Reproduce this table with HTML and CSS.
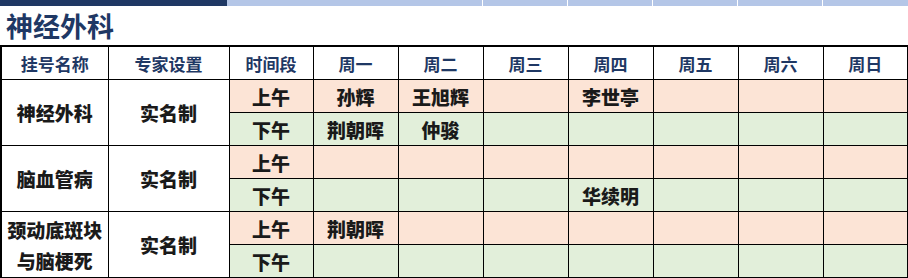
FILE: index.html
```html
<!DOCTYPE html>
<html lang="zh">
<head>
<meta charset="utf-8">
<link rel="stylesheet" href="styles.css">
</head>
<body>
<div class="topbar">
  <span class="seg dark"></span>
  <span class="seg light s1"></span>
  <span class="seg light s2"></span>
  <span class="seg light s3"></span>
  <span class="seg light s4"></span>
  <span class="seg light s5"></span>
  <span class="seg light s6"></span>
</div>
<h1 class="title">神经外科</h1>
<table class="sched">
  <colgroup>
    <col class="c-name"><col class="c-exp"><col class="c-time">
    <col class="c-day"><col class="c-day"><col class="c-day"><col class="c-day"><col class="c-day"><col class="c-day"><col class="c-day">
  </colgroup>
  <thead>
    <tr>
      <th>挂号名称</th><th>专家设置</th><th>时间段</th>
      <th>周一</th><th>周二</th><th>周三</th><th>周四</th><th>周五</th><th>周六</th><th>周日</th>
    </tr>
  </thead>
  <tbody>
    <tr class="am">
      <td class="plain" rowspan="2">神经外科</td><td class="plain" rowspan="2">实名制</td>
      <td>上午</td><td>孙辉</td><td>王旭辉</td><td></td><td>李世亭</td><td></td><td></td><td></td>
    </tr>
    <tr class="pm">
      <td>下午</td><td>荆朝晖</td><td>仲骏</td><td></td><td></td><td></td><td></td><td></td>
    </tr>
    <tr class="am">
      <td class="plain" rowspan="2">脑血管病</td><td class="plain" rowspan="2">实名制</td>
      <td>上午</td><td></td><td></td><td></td><td></td><td></td><td></td><td></td>
    </tr>
    <tr class="pm">
      <td>下午</td><td></td><td></td><td></td><td>华续明</td><td></td><td></td><td></td>
    </tr>
    <tr class="am">
      <td class="plain two" rowspan="2">颈动底斑块<br>与脑梗死</td><td class="plain" rowspan="2">实名制</td>
      <td>上午</td><td>荆朝晖</td><td></td><td></td><td></td><td></td><td></td><td></td>
    </tr>
    <tr class="pm">
      <td>下午</td><td></td><td></td><td></td><td></td><td></td><td></td><td></td>
    </tr>
  </tbody>
</table>
</body>
</html>
```

FILE: styles.css
```css
html, body {
  margin: 0;
  padding: 0;
  background: #ffffff;
}
body {
  width: 908px;
  height: 278px;
  overflow: hidden;
  font-family: "Noto Sans CJK SC", "Noto Sans", sans-serif;
}
.topbar {
  display: flex;
  gap: 1px;
  height: 6px;
}
.seg { display: block; height: 6px; }
.dark { width: 227px; background: #1f3864; margin-right: -1px; }
.light { background: #b4c6e7; }
.s1 { width: 255px; }
.s2 { width: 84px; }
.s3 { width: 84px; }
.s4 { width: 84px; }
.s5 { width: 84px; }
.s6 { flex: 1; }
.title {
  margin: 0;
  padding-left: 6px;
  height: 39px;
  line-height: 39px;
  font-size: 27px;
  font-weight: 700;
  color: #1f3864;
  letter-spacing: 0;
}
.sched {
  border-collapse: collapse;
  table-layout: fixed;
  width: 906px;
  border: 2px solid #000;
  margin-left: 0;
}
.c-name { width: 107px; }
.c-exp { width: 121px; }
.c-time { width: 84px; }
.c-day { width: 85px; }
.sched th, .sched td {
  border: 1px solid #000;
  padding: 0;
  text-align: center;
  vertical-align: middle;
  font-weight: 700;
  white-space: nowrap;
}
.sched th {
  height: 32px;
  font-size: 17px;
  color: #1f3864;
  background: #fff;
}
.sched td {
  height: 32px;
  font-size: 19px;
  font-weight: 900;
  color: #1a1a1a;
}
.am td { background: #fce4d6; }
.pm td { background: #e2efda; }
.sched td.plain { background: #fff; }
.sched td.two { line-height: 31px; }
```
